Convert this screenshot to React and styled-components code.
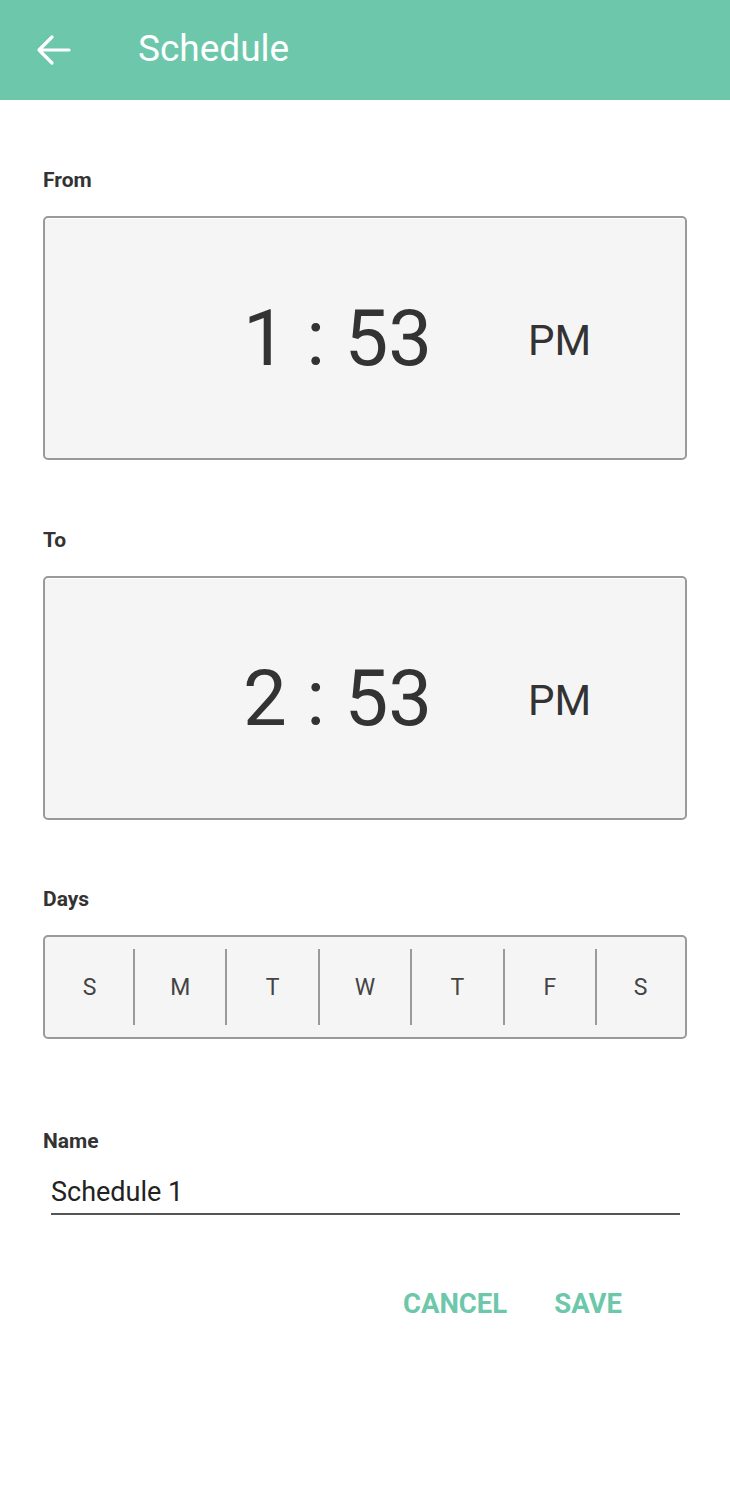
import React from "react";
import styled, { createGlobalStyle } from "styled-components";

const Global = createGlobalStyle`
  body {
    margin: 0;
    background: #fff;
    font-family: Roboto, "Liberation Sans", sans-serif;
  }
`;

const Page = styled.div`
  width: 730px;
  min-height: 1500px;
  background: #fff;
`;

const Header = styled.header`
  display: flex;
  align-items: center;
  height: 100px;
  background: #6dc7ab;
  padding-left: 36px;
  box-sizing: border-box;

  .title {
    color: #fff;
    font-size: 37px;
    margin-left: 66px;
    margin-top: -4px;
  }
`;

const Content = styled.main`
  display: flex;
  flex-flow: column;
  padding: 0 43px;
`;

const Label = styled.div`
  font-size: 21px;
  font-weight: bold;
  color: #333;
  line-height: 24px;
  margin-top: ${(p) => p.top}px;
  margin-bottom: ${(p) => p.bottom ?? 24}px;
`;

const TimeBox = styled.div`
  display: flex;
  align-items: center;
  height: 244px;
  box-sizing: border-box;
  border: 2px solid #9a9a9a;
  border-radius: 5px;
  background: #f5f5f5;
  box-shadow: inset 0 1px 0 #fff;
  padding-left: 198px;
  color: #333;

  .time {
    font-size: 78px;
    white-space: pre;
  }
  .ampm {
    font-size: 42px;
    margin-left: 96px;
    margin-top: 4px;
  }
`;

const Days = styled.div`
  display: grid;
  grid-template-columns: 89fr repeat(5, 92.4fr) 89fr;
  height: 104px;
  box-sizing: border-box;
  border: 2px solid #9a9a9a;
  border-radius: 5px;
  background: #f5f5f5;
`;

const Day = styled.div`
  position: relative;
  display: flex;
  align-items: center;
  justify-content: center;
  font-size: 23px;
  color: #444;

  &:not(:first-child)::before {
    content: "";
    position: absolute;
    left: -1px;
    top: 12px;
    bottom: 12px;
    width: 2px;
    background: #9a9a9a;
  }
`;

const NameInput = styled.div`
  margin: 0 7px 0 8px;
  font-size: 27px;
  color: #222;
  line-height: 34px;
  padding-top: 4px;
  padding-bottom: 4px;
  border-bottom: 2px solid #555;
`;

const Actions = styled.div`
  display: flex;
  justify-content: flex-end;
  gap: 47px;
  margin-top: 72px;
  padding-right: 108px;

  button {
    border: none;
    background: none;
    padding: 0;
    font-family: Roboto, "Liberation Sans", sans-serif;
    font-weight: bold;
    font-size: 27.5px;
    color: #6dc7ab;
    cursor: pointer;
  }
`;

const BackArrow = () => (
  <svg width="36" height="36" viewBox="0 0 36 36" fill="none">
    <path
      d="M3 18 H33 M3 18 L16 5 M3 18 L16 31"
      stroke="#fff"
      strokeWidth="3.2"
      strokeLinecap="round"
      strokeLinejoin="round"
    />
  </svg>
);

function Time({ value, ampm }) {
  return (
    <TimeBox>
      <span className="time">{value}</span>
      <span className="ampm">{ampm}</span>
    </TimeBox>
  );
}

export default function App() {
  const days = ["S", "M", "T", "W", "T", "F", "S"];
  return (
    <Page>
      <Global />
      <Header>
        <BackArrow />
        <span className="title">Schedule</span>
      </Header>
      <Content>
        <Label top={68}>From</Label>
        <Time value="1 : 53" ampm="PM" />
        <Label top={68}>To</Label>
        <Time value="2 : 53" ampm="PM" />
        <Label top={67}>Days</Label>
        <Days>
          {days.map((d, i) => (
            <Day key={i}>{d}</Day>
          ))}
        </Days>
        <Label top={90} bottom={18}>Name</Label>
        <NameInput>Schedule 1</NameInput>
      </Content>
      <Actions>
        <button>CANCEL</button>
        <button>SAVE</button>
      </Actions>
    </Page>
  );
}
